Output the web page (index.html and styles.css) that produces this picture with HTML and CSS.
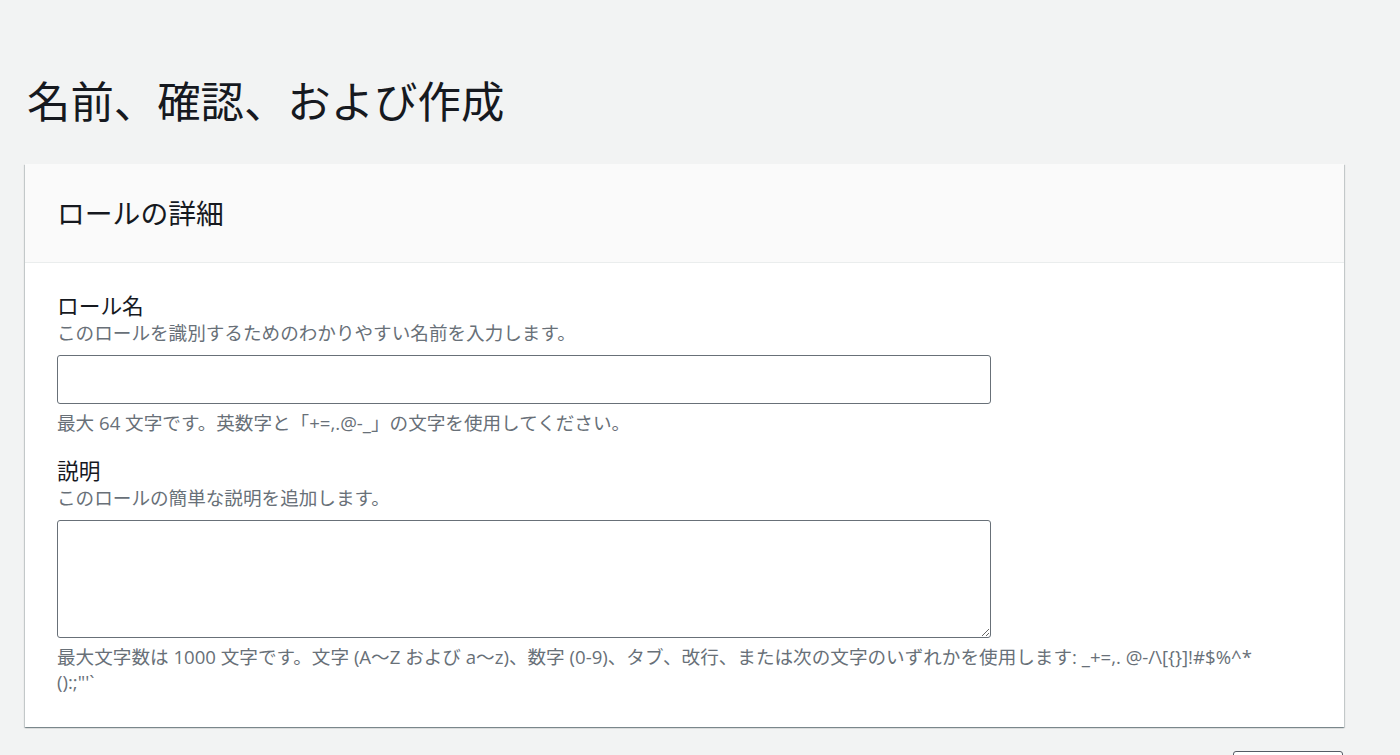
FILE: index.html
```html
<!DOCTYPE html>
<html lang="ja">
<head>
<meta charset="utf-8">
<title>名前、確認、および作成</title>
<link rel="stylesheet" href="styles.css">
</head>
<body>
<main class="page">
  <h1 class="page-title">名前、確認、および作成</h1>
  <section class="card">
    <header class="card-header">
      <h2 class="card-title">ロールの詳細</h2>
    </header>
    <div class="card-body">
      <div class="field">
        <label class="field-label" for="role-name">ロール名</label>
        <div class="field-desc">このロールを識別するためのわかりやすい名前を入力します。</div>
        <input class="text-input" id="role-name" type="text">
        <div class="field-hint">最大 64 文字です。英数字と「+=,.@-_」の文字を使用してください。</div>
      </div>
      <div class="field field-second">
        <label class="field-label" for="role-desc">説明</label>
        <div class="field-desc">このロールの簡単な説明を追加します。</div>
        <textarea class="text-area" id="role-desc"></textarea>
        <div class="field-hint">最大文字数は 1000 文字です。文字 (A〜Z および a〜z)、数字 (0-9)、タブ、改行、または次の文字のいずれかを使用します: _+=,. @-/\[{}]!#$%^*<br>():;"'`</div>
      </div>
    </div>
  </section>
  <div class="actions">
    <button class="btn" type="button">キャンセル</button>
  </div>
</main>
</body>
</html>
```

FILE: styles.css
```css
html, body {
  margin: 0;
  padding: 0;
  background: #f2f3f3;
  font-family: "Open Sans", "Noto Sans CJK JP", "Noto Sans", sans-serif;
  color: #16191f;
  overflow: hidden;
}

.page {
  padding: 76px 56px 0 25px;
}

.page-title {
  margin: 0;
  padding-left: 2px;
  font-size: 43.4px;
  font-weight: 400;
  line-height: 52px;
  color: #16191f;
}

.card {
  margin-top: 36px;
  background: #ffffff;
  box-shadow: 0 1px 1px 0 rgba(0, 28, 36, 0.3), 1px 1px 1px 0 rgba(0, 28, 36, 0.15), -1px 1px 1px 0 rgba(0, 28, 36, 0.15);
}

.card-header {
  height: 98px;
  display: flex;
  align-items: center;
  padding: 0 32px;
  background: #fafafa;
  border-bottom: 1px solid #eaeded;
}

.card-title {
  margin: 0;
  font-size: 27.8px;
  font-weight: 400;
  line-height: 36px;
  color: #16191f;
}

.card-body {
  padding: 28px 32px 33px 32px;
}

.field {
  display: flex;
  flex-direction: column;
  align-items: flex-start;
}

.field-second {
  margin-top: 21px;
}

.field-label {
  font-size: 21.7px;
  line-height: 30px;
  color: #16191f;
}

.field-desc {
  font-size: 18.6px;
  line-height: 24px;
  color: #687078;
}

.field-hint {
  margin-top: 7px;
  font-size: 18.6px;
  line-height: 24.4px;
  color: #687078;
}

.text-input,
.text-area {
  box-sizing: border-box;
  width: 934px;
  margin: 10px 0 0 0;
  border: 1.5px solid #687078;
  border-radius: 3px;
  background: #ffffff;
  font-family: inherit;
  font-size: 18px;
  padding: 6px 12px;
  outline: none;
}

.text-input {
  height: 49px;
}

.text-area {
  height: 118px;
  resize: vertical;
}

.actions {
  display: flex;
  justify-content: flex-end;
  margin-top: 24px;
}

.btn {
  width: 110px;
  height: 48px;
  margin-right: 1px;
  border: 1.5px solid #545b64;
  border-radius: 3px;
  background: #ffffff;
  color: #545b64;
  font-family: inherit;
  font-size: 21px;
  font-weight: 700;
}
```
